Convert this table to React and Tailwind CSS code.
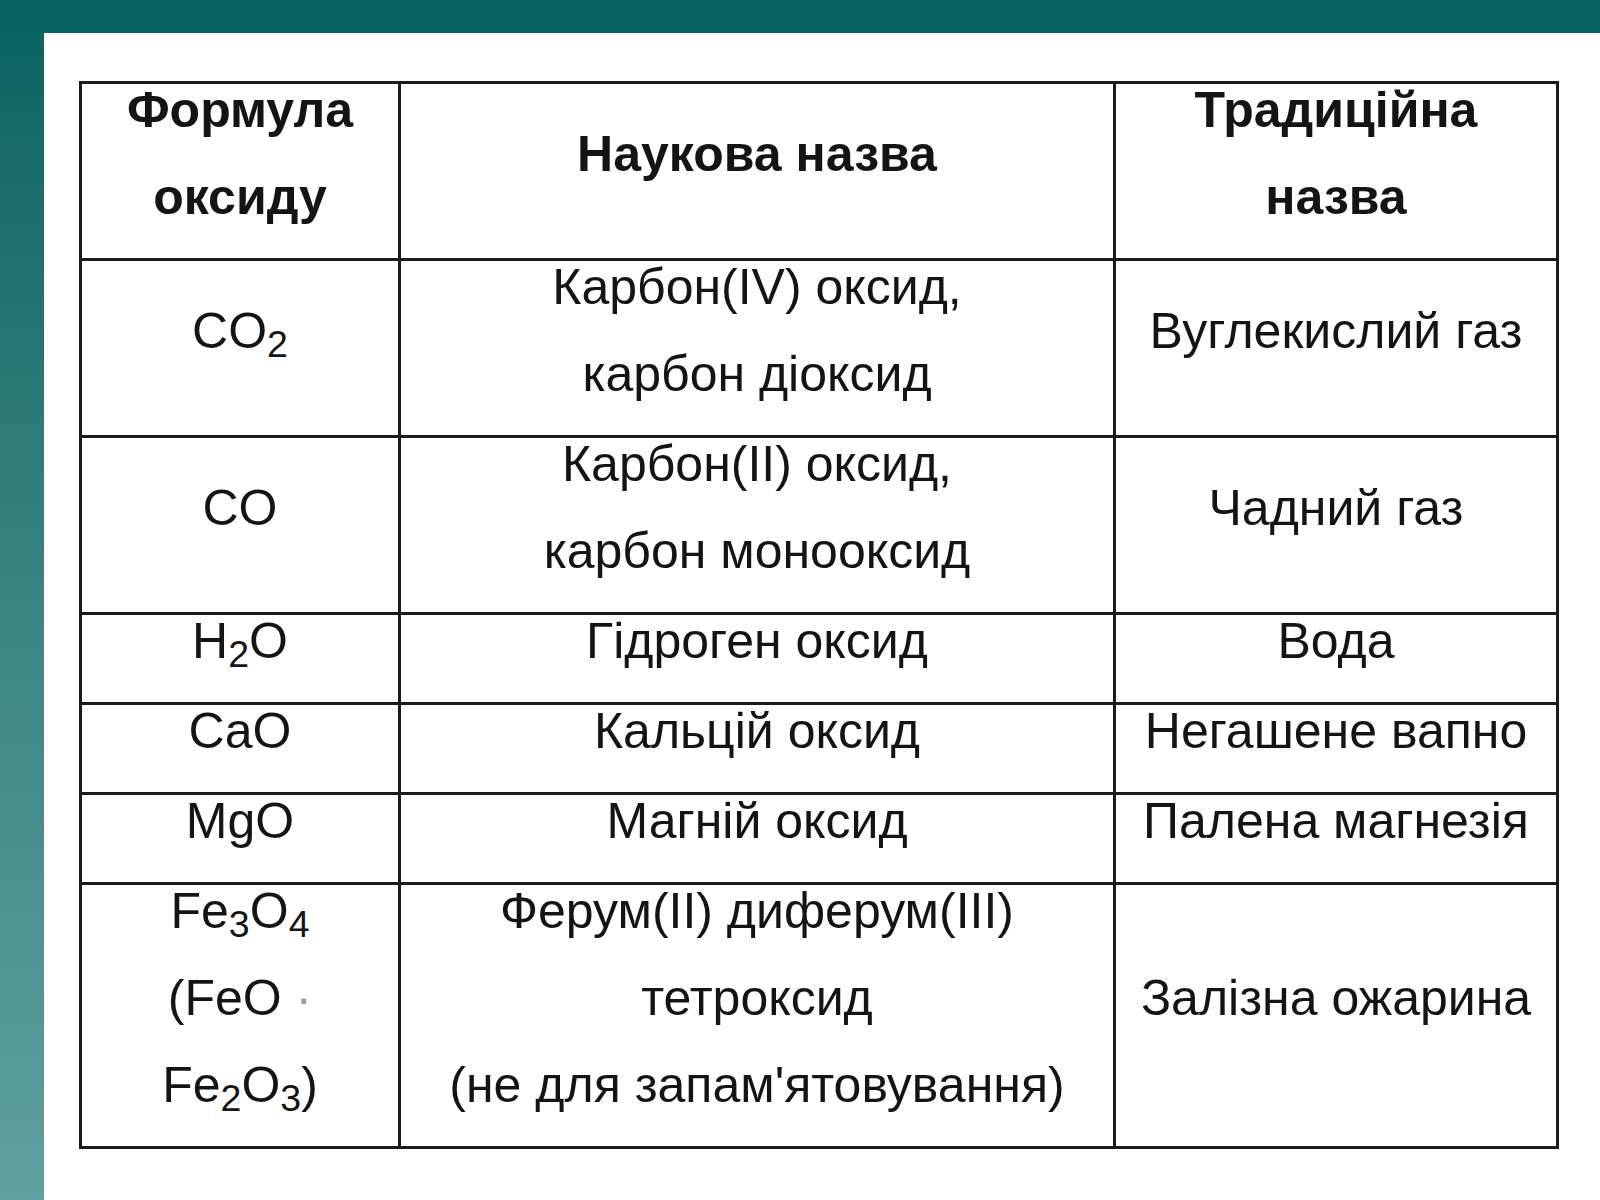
const rows = [
  {
    h: 'h-[175px]',
    formula: <>CO<sub>2</sub></>,
    sci: ['Карбон(IV) оксид,', 'карбон діоксид'],
    trad: ['Вуглекислий газ'],
  },
  {
    h: 'h-[174px]',
    formula: <>CO</>,
    sci: ['Карбон(II) оксид,', 'карбон монооксид'],
    trad: ['Чадний газ'],
  },
  {
    h: 'h-[88px]',
    formula: <>H<sub>2</sub>O</>,
    sci: ['Гідроген оксид'],
    trad: ['Вода'],
  },
  {
    h: 'h-[83px]',
    formula: <>CaO</>,
    sci: ['Кальцій оксид'],
    trad: ['Негашене вапно'],
  },
  {
    h: 'h-[88px]',
    formula: <>MgO</>,
    sci: ['Магній оксид'],
    trad: ['Палена магнезія'],
  },
];

function Cell({ children, bold = false }) {
  return (
    <td className="border-[3px] border-[#1b1b1b] p-0 text-center align-middle">
      <div className={`-translate-y-[17px] leading-[87px] whitespace-nowrap ${bold ? 'font-bold' : 'font-normal'}`}>
        {children}
      </div>
    </td>
  );
}

function Lines({ items }) {
  return items.map((t, i) => <div key={i}>{t}</div>);
}

export default function App() {
  return (
    <div
      className="flex h-[1200px] w-[1600px] flex-col bg-[#08625f] text-[50px] text-[#141414]"
      style={{ fontFamily: '"Liberation Sans", Arial, sans-serif' }}
    >
      <div className="h-[33px] shrink-0 bg-[#07625f]" />
      <div className="flex flex-1">
        <div className="w-[44px] shrink-0 bg-gradient-to-b from-[#0b6462] via-[#3a8584] to-[#5fa0a1]" />
        <div className="flex-1 bg-white pl-[35px] pt-[48px]">
          <table className="w-[1477px] table-fixed border-collapse">
            <colgroup>
              <col className="w-[319px]" />
              <col className="w-[715px]" />
              <col className="w-[443px]" />
            </colgroup>
            <tbody>
              <tr className="h-[174px]">
                <Cell bold><Lines items={['Формула', 'оксиду']} /></Cell>
                <Cell bold>Наукова назва</Cell>
                <Cell bold><Lines items={['Традиційна', 'назва']} /></Cell>
              </tr>
              {rows.map((r, i) => (
                <tr key={i} className={r.h}>
                  <Cell>{r.formula}</Cell>
                  <Cell><Lines items={r.sci} /></Cell>
                  <Cell><Lines items={r.trad} /></Cell>
                </tr>
              ))}
              <tr className="h-[263px]">
                <Cell>
                  <div>Fe<sub>3</sub>O<sub>4</sub></div>
                  <div>(FeO <span className="text-[#9a9a9a]">·</span></div>
                  <div>Fe<sub>2</sub>O<sub>3</sub>)</div>
                </Cell>
                <Cell>
                  <Lines items={['Ферум(II) диферум(III)', 'тетроксид', "(не для запам'ятовування)"]} />
                </Cell>
                <Cell>Залізна ожарина</Cell>
              </tr>
            </tbody>
          </table>
        </div>
      </div>
    </div>
  );
}
